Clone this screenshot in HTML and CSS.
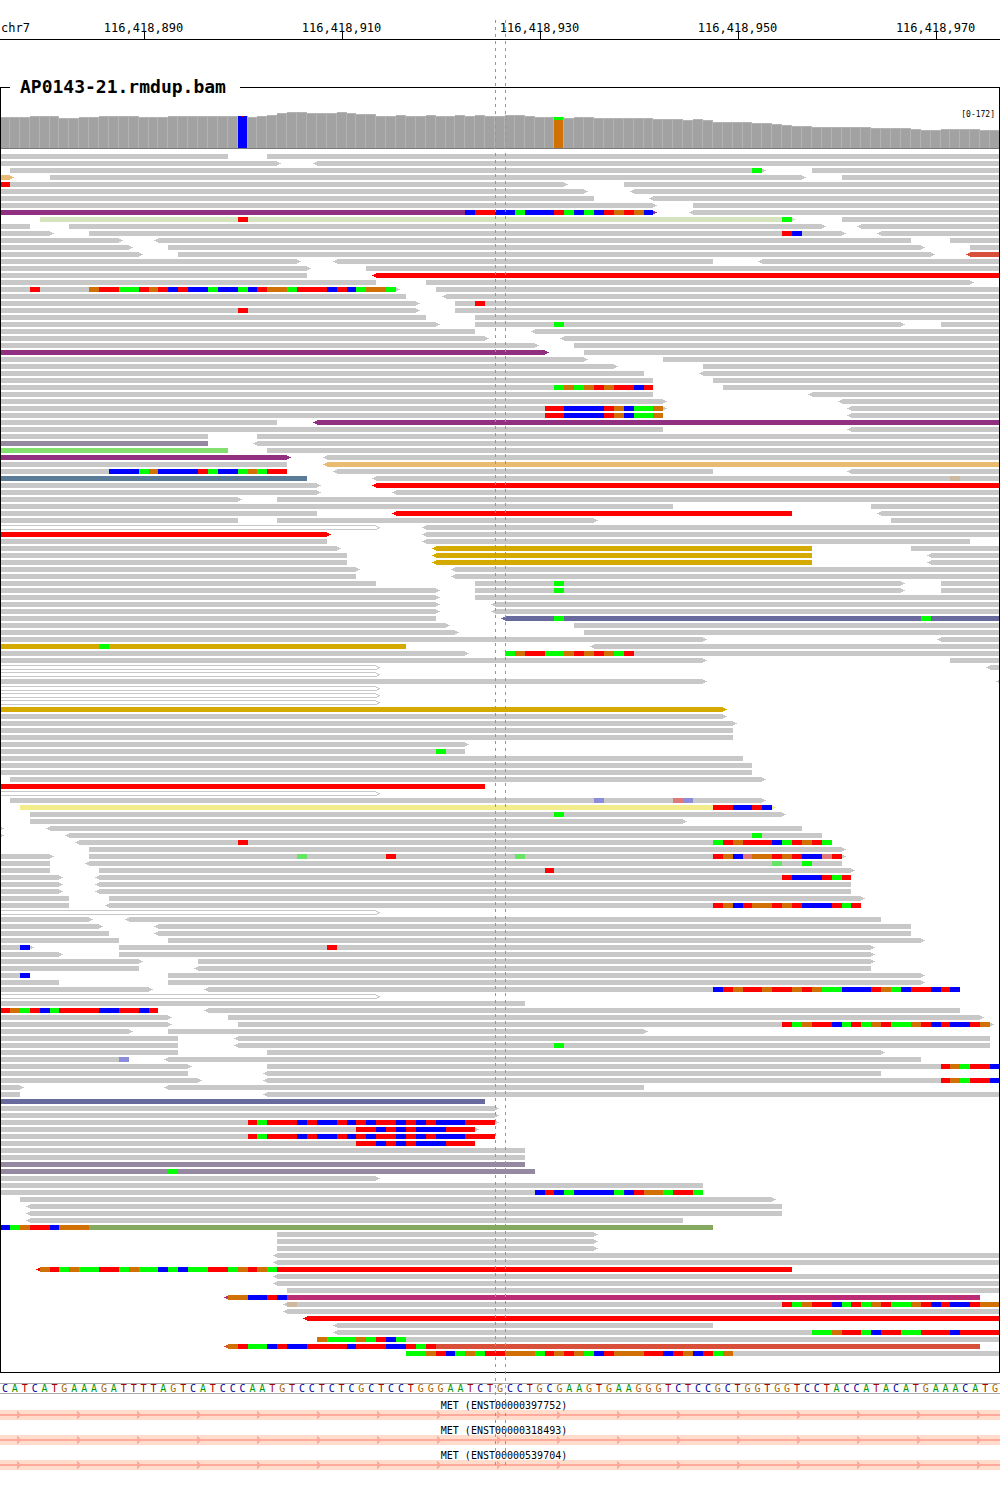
FILE: index.html
```html
<!DOCTYPE html>
<html lang="en">
<head>
<meta charset="utf-8">
<title>AP0143-21.rmdup.bam - chr7</title>
<link rel="stylesheet" href="styles.css">
</head>
<body>
<main class="browser">
  <header class="ruler">
    <div class="ruler-scale">
      <span class="chrom">chr7</span>
      <span class="tick">116,418,890</span>
      <span class="tick">116,418,910</span>
      <span class="tick">116,418,930</span>
      <span class="tick">116,418,950</span>
      <span class="tick">116,418,970</span>
    </div>
  </header>

  <fieldset class="sample">
    <legend class="sample-name">AP0143-21.rmdup.bam</legend>
    <svg class="coverage" id="coverage" role="img" aria-label="Coverage"></svg>
    <svg class="reads" id="reads" role="img" aria-label="Aligned reads"></svg>
  </fieldset>

  <div class="sequence" id="sequence"></div>

  <section class="genes">
    <div class="gene">
      <span class="gene-name">MET (ENST00000397752)</span>
      <svg class="gene-track"></svg>
    </div>
    <div class="gene">
      <span class="gene-name">MET (ENST00000318493)</span>
      <svg class="gene-track"></svg>
    </div>
    <div class="gene">
      <span class="gene-name">MET (ENST00000539704)</span>
      <svg class="gene-track"></svg>
    </div>
  </section>

  <div class="guide guide-start"></div>
  <div class="guide guide-end"></div>
</main>
<script src="tracks.js"></script>
</body>
</html>
```
FILE: styles.css
```css
* {
  box-sizing: border-box;
}

body {
  margin: 0;
  background: #fff;
  color: #000;
  font-family: "DejaVu Sans Mono", monospace;
}

.browser {
  position: relative;
  padding-bottom: 20px;
  overflow: hidden;
}

/* Position ruler */
.ruler {
  height: 40px;
  border-bottom: 1px solid #000;
  overflow: hidden;
}

.ruler-scale {
  display: grid;
  grid-template-columns: 45fr repeat(5, 200fr);
  width: calc(100% * 1045 / 1010);
  padding-top: 21px;
  font-size: 12px;
  line-height: 14px;
}

.chrom {
  padding-left: 1px;
}

.tick {
  display: flex;
  flex-direction: column;
  align-items: center;
}

.tick::after {
  content: "";
  width: 1px;
  height: 8px;
  margin-top: -4px;
  margin-left: 1px;
  background: #000;
}

/* Sample frame */
.sample {
  min-width: 0;
  margin: 36px 0 10px;
  padding: 0 0 16px;
  border: 1px solid #000;
}

.sample-name {
  margin-left: 9px;
  padding: 0 14px 0 10px;
  font-size: 18px;
  font-weight: bold;
  line-height: 22px;
}

.coverage,
.reads,
.gene-track {
  display: block;
  width: 100%;
  shape-rendering: crispEdges;
}

.coverage {
  height: 51px;
}

.reads {
  height: 1207px;
}

.range {
  font-size: 8px;
  text-anchor: end;
}

/* Reference sequence */
.sequence {
  display: grid;
  grid-template-columns: repeat(101, 1fr);
  border-top: 1px solid #aaa;
  border-bottom: 1px solid #aaa;
  font-size: 10px;
  line-height: 9px;
  text-align: center;
}

.base-a { color: #009600; }
.base-c { color: #000096; }
.base-g { color: #aa6400; }
.base-t { color: #aa0000; }

/* Transcripts */
.gene {
  height: 25px;
  padding-top: 6px;
}

.gene-name {
  display: block;
  height: 10px;
  padding-left: 8px;
  font-size: 10px;
  line-height: 12px;
  text-align: center;
}

.gene-track {
  height: 10px;
  background: #ffdccc;
}

/* Dashed lines round the centre base */
.guide {
  position: absolute;
  top: 20px;
  bottom: 24px;
  width: 1px;
  background: repeating-linear-gradient(#969696 0 3px, transparent 3px 7px);
}

.guide-start {
  left: calc(100% * 50 / 101);
}

.guide-end {
  left: calc(100% * 51 / 101);
}
```
FILE: tracks.js
```javascript
const BASES = 101;
const ROW_STEP = 7;
const READ_HEIGHT = 5;

const BASE_COLORS = {
  A: '#00ff00', C: '#0000ff', G: '#d17105', T: '#ff0000',
  a: '#64e664', c: '#8c8cdc', g: '#cdb8a0', t: '#e07878'
};

const READ_COLORS = {
  grey: '#c8c8c8', purple: '#912f80', red: '#ff0000', gold: '#d4aa00',
  tan: '#e8bb70', pale: '#d6e3bf', coral: '#d9503a', mauve: '#9489a0',
  mint: '#83e070', steel: '#5a7c98', indigo: '#68699c', lemon: '#f3ec8a',
  moss: '#86a960', plum: '#bb2c75'
};

const SEQUENCE =
  'CATCATGAAAGATTTTAGTCATCCCAATGTCCTCTCGCTCCTGGGAATCT' +
  'GCCTGCGAAGTGAAGGGTCTCCGCTGGTGGTCCTACCATACATGAAACATG';

/* Depth of each base, as height*count runs */
const COVERAGE =
  '31*3 32*3 30*2 31*2 32*4 31*3 32*8 31 32 33 35 36*2 35*3 36 35 34*2 32*2 ' +
  '33 32*2 33 32*2 33 32 33 32*2 33*2 32 31*2 31 30 31*2 30*6 29*3 28 29 28 ' +
  '26*4 25*2 24 23 22*2 21*6 20*4 19 18*2 19*4 18*2';

/* One line per row. A read is [<]start-end[>][/color][;position:bases ...],
   where < and > mark the strand arrow. */
const ROWS = `
0-23 27-101
0-28> <32-101
1-77>;76:A 82-101
0-1>/tan 5-81> 85-101
0-57>;0:T 63-101
0-59> <64-101
0-60 <66-101
0-66> 70-101
0-66>/purple;47:CTTCCACCCTACACTGTGC <70-101
4-80>/pale;24:T;79:A 85-101
0-3 7-83> <87-101
0-5> 9-85>;79:TC <89-101
0-12> <16-92 96-101
0-13> 17-93> 98-101
0-14> 18-94> <98-101/coral
0-30> <34-72 <77-101
0-31> 37-101
0-31 <38-101/red
0-38 43-98>
0-40>;3:T;9:GTTAATGTCTCCACCACTGGATTTCTCAGGA 44-101
0-41 <45-101
0-42> 46-101;48:T
0-42>;24:T 46-101
0-43 48-101
0-44> 48-91>;56:A 95-101
0-48 <54-101
0-49> <57-101
0-54> 58-101
0-55>/purple 59-101
0-59> 67-101
0-62> 71-101
0-65 <71-101
0-66 72-101
0-66;56:AGAGTGTTCT 73-101
0-66 <82-101
0-67> <85-101
0-67>;55:TTCCCCTGCAAG <86-101
0-67;55:TTCCCCTGCAAG <86-101
0-28 <32-101/purple
0-67 <86-101
0-21 26-101
0-21/mauve <26-101
0-23/mint 27-101
0-29>/purple <33-101
0-29 <33-101/tan
0-29;11:CCCAGCCCCTACCAGATT <34-72 <86-101
0-31/steel <38-101;96:g
0-32> <38-101/red
0-32> <40-101
0-24> 28-101
0-68 88-101
0-32 <40-80/red <89-101
0-24 28-60> 90-101
0-38>/hollow <43-101
0-33>/red <43-101
0-33 <43-98
0-34> <44-82/gold 92-101
0-35 <44-82/gold <94-101
0-35 <44-82/gold <94-101
0-36> <46-101
0-36 <46-101
0-38 48-91>;56:A 95-101
0-44> 48-91>;56:A 95-101
0-44> 48-101
0-44> <50-101
0-44> <50-101
0-44 <51-101/indigo;56:A;93:A
0-45> 58-101
0-46> 59-101
0-71> <95-101
0-41/gold;10:A <60-101
0-47> 51-101;51:AGTTAAGTGTGAT
0-71> 96-101
0-38>/hollow <100-101
0-38>/hollow
0-71> <101-102
0-38>/hollow
0-38>/hollow
0-38>/hollow
0-73>/gold
0-73>
0-74>
0-74
0-74
0-47>
0-47;44:A
0-75
0-76
0-76
1-77>
0-49/red
0-38>/hollow
1-77>;60:c;68:tc
2-78>/lemon;72:TTCCTC
3-79>;56:A
3-69>
0-0> <5-81
0-0> <7-83;76:A
<8-84;24:T;72:ATGTTTCATGTA
9-85>
0-5> 9-85>;30:a;39:T;52:a;72:TGCtGGTGTCCtT
0-5 <9-85;78:a;81:A
0-5 10-86>;55:T
0-6> <10-86;79:TCCCTAT
0-6> <10-86
0-6> <10-86
0-7 11-87>
0-7 <11-87;72:TGCTGGTGTCCCTAT
0-38>/hollow
0-9> <13-89
0-10> <16-92
0-11 <16-92
0-12 17-93>
0-3>;2:C 12-88>;33:T
0-6> 12-88>
0-14> 20-88>
0-14 <20-88
0-3;2:C 17-93>
0-6 17-93>
0-15> <21-97;72:CTGTTGTTGTGAACCCTGACTTCTC
0-38>/hollow
0-53
0-16;0:TGATCATTTTCCTTCT <21-97
0-17> 23-99>
0-17> 24-100>;79:TAGTTCATAGTAAGTCTCCTG
0-13> 17-65>
0-18 <24-100
0-18 <24-100;56:A
0-18 27-89>
0-13;12:c <17-93
0-19> 27-101;95:TGATTC
0-19 <27-89
0-20> <27-101;95:TGATTC
0-2> <17-65
0-2 <27-101
0-49/indigo
0-50>
0-50>
0-50>;25:TATTTCTCCTCTCTTCTCTCCCTTT
0-48>;36:TTCTCTCCCTTT
0-50;25:TATTTCTCCTCTCTTCTCTCCCTTT
0-48;36:TTCTCTCCCTTT
0-53
0-53
0-53/mauve
0-54/mauve;17:A
0-38>
0-71
0-71;54:CTCACCCCACTGGATTA
2-78>
<3-79
<3-79
<3-69
0-72/moss;0:CAGTTCGGG
28-60>
28-60>
28-60>
<28-101
<28-101
<4-80/red;4:GTAGAATTAGAACACAATTAGTGA
<28-101
<28-101
29-101
<23-99/plum;23:GGCCTC
<29-101;29:g;79:TAGTTCATAGTAAGTCTCCTGG
<29-101
<31-101/red
<34-72
<34-101;82:AAGTTACTTAATTTCTTTT
32-101;32:GAAAGATCA
<23-99/coral;23:GTAACTCCTTTTCTTTCCTAT
41-101;41:AAGTCAGATTGGGATGTGACTGGGTTCTGCTAG
`.trim().split('\n');

const SVG_NS = 'http://www.w3.org/2000/svg';

function add(parent, name, attributes) {
  const node = document.createElementNS(SVG_NS, name);
  for (const key in attributes) node.setAttribute(key, attributes[key]);
  parent.appendChild(node);
  return node;
}

function box(parent, x, y, width, height, fill) {
  return add(parent, 'rect', { x, y, width, height, fill });
}

/* The frame's border hides the first pixel of the scale */
function startLayer(svg) {
  svg.replaceChildren();
  return add(svg, 'g', { transform: 'translate(-1 0)' });
}

function drawCoverage(svg, scale) {
  const layer = startLayer(svg);
  const floor = 50;
  const heights = COVERAGE.split(' ').flatMap(run => {
    const [height, count] = run.split('*');
    return Array(Number(count || 1)).fill(Number(height));
  });
  heights.forEach((height, i) => {
    const x = scale(i);
    const width = scale(i + 1) - x;
    box(layer, x, floor - height, width, height, '#b3b3b3');
    box(layer, x, floor - height + 1, width - 1, height - 1, '#a2a2a2');
  });
  const blue = scale(24);
  const orange = scale(56);
  box(layer, blue, floor - 32, 9, 32, BASE_COLORS.C);
  box(layer, blue + 4, floor - 32, 1, 1, BASE_COLORS.T);
  box(layer, orange, floor - 28, 9, 28, BASE_COLORS.G);
  box(layer, orange, floor - 31, 9, 3, BASE_COLORS.A);
  box(layer, 0, floor, scale(BASES), 1, '#787878');
  const label = add(layer, 'text', { class: 'range', x: scale(BASES) - 5, y: 19 });
  label.textContent = '[0-172]';
}

function drawHollow(layer, x, end, y) {
  const color = READ_COLORS.grey;
  box(layer, x, y, end - x, 1, color);
  box(layer, x, y + 4, end - x + 1, 1, color);
  box(layer, end, y + 1, 2, 1, color);
  box(layer, end + 2, y + 2, 2, 1, color);
  box(layer, end + 1, y + 3, 2, 1, color);
}

function drawRead(layer, text, y, scale) {
  const [head, ...changes] = text.split(';');
  const [, left, start, stop, right, name] =
    head.match(/^(<?)(\d+)-(\d+)(>?)(?:\/(\w+))?$/);
  const x = scale(Number(start));
  const end = scale(Number(stop));
  if (name === 'hollow') {
    drawHollow(layer, x, end, y);
    return;
  }
  const color = READ_COLORS[name || 'grey'];
  box(layer, x, y, end - x, READ_HEIGHT, color);
  if (left) {
    box(layer, x - 2, y + 1, 2, 3, color);
    box(layer, x - 4, y + 2, 2, 1, color);
  }
  if (right) {
    box(layer, end, y + 1, 2, 3, color);
    box(layer, end + 2, y + 2, 2, 1, color);
  }
  for (const change of changes) {
    const [position, bases] = change.split(':');
    [...bases].forEach((base, i) => {
      const from = scale(Number(position) + i);
      const to = scale(Number(position) + i + 1);
      box(layer, from, y, to - from, READ_HEIGHT, BASE_COLORS[base]);
    });
  }
}

function drawReads(svg, scale) {
  const layer = startLayer(svg);
  ROWS.forEach((row, i) => {
    for (const read of row.split(' ')) drawRead(layer, read, 5 + i * ROW_STEP, scale);
  });
}

function drawGene(svg, width) {
  const color = '#ffaa9b';
  svg.replaceChildren();
  box(svg, 0, 4, width, 2, color);
  for (let x = 17; x < width; x += 60) {
    add(svg, 'path', { d: `M${x} 1h1v1h1v1h1v1h1v2h-1v1h-1v1h-1v1h-1z`, fill: color });
  }
}

function draw() {
  const width = document.querySelector('.browser').clientWidth;
  const scale = base => Math.round(base * width / BASES);
  drawCoverage(document.getElementById('coverage'), scale);
  drawReads(document.getElementById('reads'), scale);
  document.querySelectorAll('.gene-track').forEach(svg => drawGene(svg, width));
}

for (const base of SEQUENCE) {
  const cell = document.createElement('span');
  cell.className = 'base-' + base.toLowerCase();
  cell.textContent = base;
  document.getElementById('sequence').appendChild(cell);
}

draw();
window.addEventListener('resize', draw);
```
